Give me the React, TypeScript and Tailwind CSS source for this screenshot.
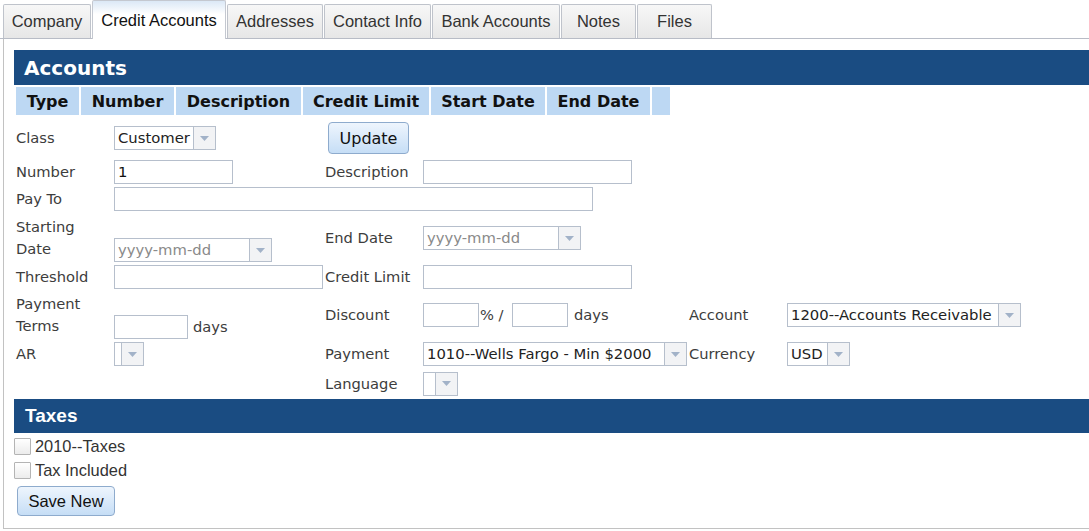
import type { ReactNode } from "react";

const tabs = [
  { name: "Company", w: "w-[88px]" },
  { name: "Credit Accounts", w: "w-[134px]", active: true },
  { name: "Addresses", w: "w-[96px]" },
  { name: "Contact Info", w: "w-[107px]" },
  { name: "Bank Accounts", w: "w-[128px]" },
  { name: "Notes", w: "w-[75px]" },
  { name: "Files", w: "w-[75px]" },
];

const columns = [
  { name: "Type", w: "w-[63px]" },
  { name: "Number", w: "w-[93px]" },
  { name: "Description", w: "w-[125px]" },
  { name: "Credit Limit", w: "w-[126px]" },
  { name: "Start Date", w: "w-[114px]" },
  { name: "End Date", w: "w-[103px]" },
  { name: "", w: "w-[18px]" },
];

const verdana = "font-['DejaVu_Sans',Verdana,sans-serif]";
const arial = "font-['Liberation_Sans',Arial,sans-serif]";

function Label({ children }: { children?: ReactNode }) {
  return (
    <div className={`w-[98px] shrink-0 text-[14.7px] leading-[22px] text-[#3d3d3d] ${verdana}`}>
      {children}
    </div>
  );
}

function TextBox({ w, value }: { w: string; value?: string }) {
  return (
    <div
      className={`${w} h-[24px] shrink-0 border border-[#b6bfcc] bg-white pl-[3px] flex items-center text-[14.8px] text-[#111] ${verdana}`}
    >
      {value}
    </div>
  );
}

function Select({ w, value, placeholder }: { w: string; value?: string; placeholder?: string }) {
  return (
    <div className={`${w} h-[24px] shrink-0 flex border border-[#b6bfcc] bg-white`}>
      <div
        className={`flex-1 min-w-0 pl-[3px] flex items-center whitespace-nowrap overflow-hidden text-[14.8px] ${verdana} ${
          value ? "text-[#222]" : "text-[#8a8a8a]"
        }`}
      >
        {value ?? placeholder}
      </div>
      <div className="w-[22px] shrink-0 border-l border-[#b6bfcc] bg-[#f2f3f5] flex items-center justify-center">
        <svg width="9" height="5" viewBox="0 0 9 5">
          <path d="M0 0 H9 L4.5 5 Z" fill="#a2b2c8" />
        </svg>
      </div>
    </div>
  );
}

function Checkbox({ label }: { label: string }) {
  return (
    <div className="flex h-[24px] items-center">
      <div className="w-[17px] h-[17px] border border-[#b4b4b4] rounded-[1px] bg-linear-to-b from-white to-[#ececec]" />
      <span className={`ml-[4px] text-[16.4px] text-[#333] ${arial}`}>{label}</span>
    </div>
  );
}

export default function App() {
  return (
    <div className="w-[1089px] h-[531px] overflow-hidden bg-white">
      {/* tab strip */}
      <div className="flex items-end gap-[1px] pl-[3px] h-[39px] border-b border-[#b8bcc6]">
        {tabs.map((t) =>
          t.active ? (
            <div
              key={t.name}
              className={`${t.w} h-[39px] -mb-[1px] pt-[1px] flex items-center justify-center border border-b-0 border-[#c4c8d0] rounded-t-[2px] bg-linear-to-b from-[#dbe8f6] via-white via-[35%] to-white text-[16.5px] text-[#111] ${arial}`}
            >
              {t.name}
            </div>
          ) : (
            <div
              key={t.name}
              className={`${t.w} h-[34px] flex items-center justify-center border border-b-0 border-[#bfc3cb] rounded-t-[2px] bg-linear-to-b from-[#f7f7f7] to-[#e7e7e7] text-[16.5px] text-[#333] ${arial}`}
            >
              {t.name}
            </div>
          )
        )}
      </div>

      <div className="ml-[3px] w-[1100px] border-l border-b border-[#c2c2c2] pl-[10px] pt-[11px] pb-[12px]">
        <div className={`h-[35px] bg-[#1a4c82] flex items-center pl-[10px] text-[20px] font-bold text-white ${verdana}`}>
          Accounts
        </div>

        <div className="mt-[2px] pl-[2px] flex gap-[2px]">
          {columns.map((c, i) => (
            <div
              key={i}
              className={`${c.w} h-[28px] pt-[1px] bg-[#bdd8f3] flex items-center justify-center text-[16px] font-bold text-[#111] ${verdana}`}
            >
              {c.name}
            </div>
          ))}
        </div>

        <div className="mt-[3px] pl-[2px]">
          <div className="flex h-[40px] items-center">
            <Label>Class</Label>
            <div className="w-[211px] shrink-0">
              <Select w="w-[102px]" value="Customer" />
            </div>
            <div className="pl-[3px]">
              <button
                className={`w-[81px] h-[32px] pt-[1px] rounded-[4px] border border-[#8eabcd] bg-linear-to-b from-[#eef5fd] to-[#c6def6] text-[16px] text-[#111] ${verdana}`}
              >
                Update
              </button>
            </div>
          </div>

          <div className="flex h-[28px] items-center">
            <Label>Number</Label>
            <div className="w-[211px] shrink-0">
              <TextBox w="w-[119px]" value="1" />
            </div>
            <Label>Description</Label>
            <TextBox w="w-[209px]" />
          </div>

          <div className="flex h-[26px] items-center">
            <Label>Pay To</Label>
            <TextBox w="w-[479px]" />
          </div>

          <div className="flex h-[52px] items-center">
            <Label>
              Starting
              <br />
              Date
            </Label>
            <div className="w-[211px] shrink-0 self-end mb-[2px]">
              <Select w="w-[158px]" placeholder="yyyy-mm-dd" />
            </div>
            <Label>End Date</Label>
            <Select w="w-[158px]" placeholder="yyyy-mm-dd" />
          </div>

          <div className="flex h-[26px] items-center">
            <Label>Threshold</Label>
            <div className="w-[211px] shrink-0">
              <TextBox w="w-[209px]" />
            </div>
            <Label>Credit Limit</Label>
            <TextBox w="w-[209px]" />
          </div>

          <div className="flex h-[50px] items-center">
            <Label>
              Payment
              <br />
              Terms
            </Label>
            <div className={`w-[211px] shrink-0 self-end mb-[1px] flex items-center text-[14.7px] text-[#3d3d3d] ${verdana}`}>
              <TextBox w="w-[74px]" />
              <span className="ml-[5px]">days</span>
            </div>
            <Label>Discount</Label>
            <div className={`w-[266px] shrink-0 flex items-center text-[14.7px] text-[#3d3d3d] ${verdana}`}>
              <TextBox w="w-[56px]" />
              <span className="w-[33px] pl-[1px]">% /</span>
              <TextBox w="w-[56px]" />
              <span className="pl-[6px]">days</span>
            </div>
            <Label>Account</Label>
            <Select w="w-[234px]" value="1200--Accounts Receivable" />
          </div>

          <div className="flex h-[28px] items-center">
            <Label>AR</Label>
            <div className="w-[211px] shrink-0">
              <Select w="w-[30px]" value="" />
            </div>
            <Label>Payment</Label>
            <div className="w-[266px] shrink-0">
              <Select w="w-[264px]" value="1010--Wells Fargo - Min $2000" />
            </div>
            <Label>Currency</Label>
            <Select w="w-[63px]" value="USD" />
          </div>

          <div className="flex h-[31px] items-center">
            <div className="w-[309px] shrink-0" />
            <Label>Language</Label>
            <Select w="w-[35px]" value="" />
          </div>
        </div>

        <div className={`h-[34px] bg-[#1a4c82] flex items-center pl-[11px] text-[19px] font-bold text-white ${arial}`}>
          Taxes
        </div>

        <div className="mt-[1px]">
          <Checkbox label="2010--Taxes" />
          <Checkbox label="Tax Included" />
        </div>

        <button
          className={`mt-[4px] ml-[3px] w-[98px] h-[30px] rounded-[4px] border border-[#8eabcd] bg-linear-to-b from-[#eef5fd] to-[#c6def6] text-[16.5px] text-[#111] ${arial}`}
        >
          Save New
        </button>
      </div>
    </div>
  );
}
